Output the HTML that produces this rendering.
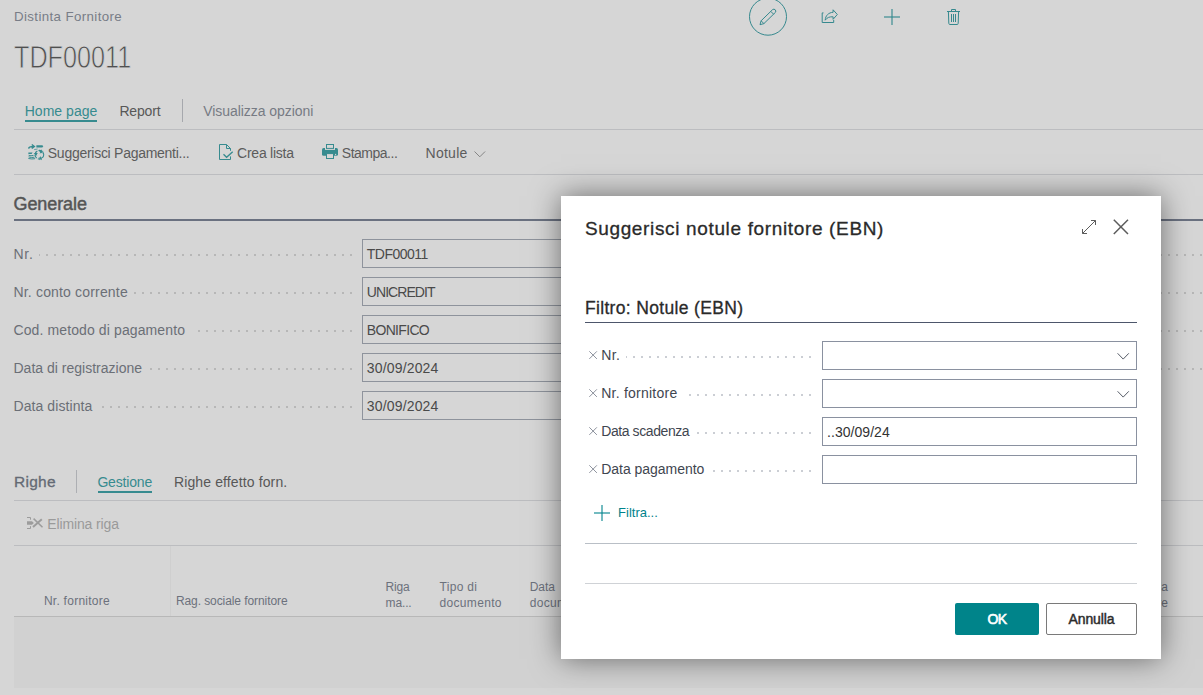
<!DOCTYPE html>
<html lang="it">
<head>
<meta charset="utf-8">
<title>Distinta Fornitore - TDF00011</title>
<style>
*{box-sizing:border-box;margin:0;padding:0}
html,body{width:1203px;height:695px;overflow:hidden}
body{background:#d6d6d6;font-family:"Liberation Sans",sans-serif;font-size:14px;color:#444;position:relative}
.abs{position:absolute;white-space:nowrap;line-height:1}
.t{position:absolute;white-space:nowrap;line-height:20px;height:20px;transform-origin:0 50%}
.hl{position:absolute;height:1px;background:#bcbdc0}
.vl{position:absolute;width:1px;background:#bcbcbc}
.teal{color:#378b8f}
.lbl{color:#6b6f76}
.inp{position:absolute;height:29px;border:1px solid #8e939c;left:362px;width:260px}
.dots{position:absolute;height:2px;background-image:linear-gradient(90deg,#b7b7b7 2px,transparent 2px);background-size:8px 2px;background-repeat:repeat-x}
/* dialog */
#dlg{position:absolute;left:561px;top:196px;width:600px;height:463px;background:#fff;box-shadow:0 0 28px rgba(0,0,0,.5)}
#dlg .hl{background:#c4c8cd}
.dinp{position:absolute;left:261px;width:315px;height:29px;border:1px solid #8a91a0}
.dlbl{color:#3f4650}
.ddots{position:absolute;height:2px;background-image:linear-gradient(90deg,#cbced4 2px,transparent 2px);background-size:8px 2px;background-repeat:repeat-x}
.btn{position:absolute;top:407px;height:32px;border-radius:2px;text-align:center;line-height:30px;font-size:14px}
svg{position:absolute;overflow:visible}
</style>
</head>
<body>
<!-- header -->
<div class="t" style="left:14.0px;top:7.200px;font-size:13.300px;color:#787d87;letter-spacing:0.38px">Distinta Fornitore</div>
<div class="t" style="left:14.0px;top:37px;font-size:31.500px;color:#505050;-webkit-text-stroke:.8px #d6d6d6;height:40px;line-height:40px;transform:scaleX(0.802);letter-spacing:-0.04px">TDF00011</div>

<!-- header icons -->
<svg style="left:0;top:0" width="1203" height="40" viewBox="0 0 1203 40" fill="none" stroke="#36898e" stroke-width="1" stroke-linejoin="round">
<circle cx="768" cy="16.7" r="18.5"/>
<path d="M761.100 20.800L772.600 9.600A2 2 0 0 1 775.400 12.400L763.900 23.600L760 24.700Z M761.100 20.800L763.900 23.600 M770.800 11.400L773.600 14.200"/>
<path d="M823.500 12.900H822.200V22.500H833.700V20"/>
<path d="M833.100 9.800L837.300 14.500L833.100 19.300V16.800C829.500 16.600 827 17.500 825.200 20.200C825.500 15.500 828.500 12.600 833.100 12.300Z"/>
<path d="M892 9V25" stroke="#2f878c" stroke-opacity=".55" stroke-width="2"/><path d="M884 17H900" stroke="#2f878c" stroke-opacity=".55" stroke-width="2"/>
<path d="M947 11.500H960M951.500 11.500V9.500H955.500V11.500M948.400 11.500L948.800 23.400Q948.900 24.500 949.900 24.500H957.100Q958.100 24.500 958.200 23.400L958.600 11.500M951.500 14V22M953.500 14V22M955.500 14V22"/>
</svg>

<!-- tabs -->
<div class="t teal" style="left:24.7px;top:101px;letter-spacing:0.03px">Home page</div>
<div class="abs" style="left:25px;top:120px;width:72px;height:2px;background:#378b8f"></div>
<div class="t" style="left:119.4px;top:101px;color:#585858;letter-spacing:-0.15px">Report</div>
<div class="vl" style="left:182px;top:99px;height:23px;background:#a6a8ad"></div>
<div class="t" style="left:203.3px;top:101px;color:#767b84;letter-spacing:-0.06px">Visualizza opzioni</div>
<div class="hl" style="left:14px;top:129px;width:1189px"></div>

<!-- actions -->
<svg style="left:28px;top:144px" width="16" height="16" viewBox="0 0 16 16" fill="none" stroke="#378b8f" stroke-width="1.3">
<path d="M.7 4.600C.8 2.800 2 2.400 6 2.500M3.800.5L6.300 2.500 3.800 4.500" stroke-width="1.500"/>
<path d="M8.400 1.200H14.300L15.300 2.300 14.300 3.400H8.400Z" fill="#378b8f" stroke="none"/>
<path d="M.4 8.600H4.600L3.600 10.100H.4Z" fill="#378b8f" stroke="none"/>
<path d="M.6 11.200Q3 12.300 5.500 11.400M.6 12.900Q3.500 14 6.500 13.200M.4 14.500Q3.800 15.300 7.200 14.700" stroke-width="1"/>
<circle cx="11.400" cy="10.700" r="4.300" stroke-width="1.100" stroke-dasharray="3.500 1.200"/>
<path d="M13.200 5.200l.6 1.600 1.700.1-1.300 1.100.4 1.700-1.400-.9-1.500.9.500-1.700-1.400-1.100 1.800-.1z M7.800 7.600l.6 1.500 1.600.1-1.200 1 .4 1.600-1.400-.9-1.400.9.400-1.600-1.200-1 1.600-.1z M12.600 12l.6 1.500 1.600.1-1.200 1 .4 1.600-1.400-.9-1.400.9.400-1.600-1.200-1 1.600-.1z" fill="#378b8f" stroke="none"/>
<path d="M6.200 5.600L9.600 5" stroke-width=".9" opacity=".8"/>
</svg>
<svg style="left:219px;top:144px" width="15" height="16" viewBox="0 0 15 16" fill="none" stroke="#378b8f" stroke-width="1">
<path d="M11.500 6.800V4.500L7.500.5H.5V15.500H11.500V12.400M7.500.5V4.500H11.500"/>
<path d="M4.500 10.200L7.600 13.300 13.700 7.700" stroke-width="1.300"/>
</svg>
<svg style="left:322px;top:144px" width="16" height="15" viewBox="0 0 16 15">
<rect x="0" y="4.100" width="16" height="7.700" rx="1.600" fill="#378b8f"/>
<rect x="3" y="0" width="10" height="5.900" fill="#d6d6d6"/>
<rect x="4.500" y=".5" width="7" height="3.900" fill="none" stroke="#378b8f"/>
<rect x="4.500" y="9.600" width="7" height="4.900" fill="#d6d6d6" stroke="#378b8f"/>
<circle cx="13.600" cy="10.500" r=".65" fill="#d6d6d6"/>
</svg>
<div class="t" style="left:47.8px;top:143px;color:#5c5c5c;letter-spacing:-0.27px">Suggerisci Pagamenti...</div>
<div class="t" style="left:237.1px;top:143px;color:#5c5c5c;letter-spacing:-0.25px">Crea lista</div>
<div class="t" style="left:341.8px;top:143px;color:#5c5c5c;letter-spacing:-0.49px">Stampa...</div>
<div class="t" style="left:425.5px;top:143px;color:#5c5c5c;letter-spacing:0.27px">Notule</div>
<svg style="left:474px;top:151px" width="12" height="7" viewBox="0 0 12 7" fill="none" stroke="#858585" stroke-width="1"><path d="M.5.500l5.300 5.300 5.300-5.300"/></svg>
<div class="hl" style="left:14px;top:174px;width:1189px"></div>

<!-- Generale -->
<div class="t" style="left:13.5px;top:194px;font-size:18px;-webkit-text-stroke:0.45px #555;color:#555;letter-spacing:-0.09px">Generale</div>
<div class="hl" style="left:14px;top:219px;width:1189px;height:2px;background:#6a7180"></div>

<div class="t lbl" style="left:13.5px;top:244px;letter-spacing:0.75px">Nr.</div>
<div class="t lbl" style="left:13.5px;top:282px;letter-spacing:0.17px">Nr. conto corrente</div>
<div class="t lbl" style="left:13.5px;top:320px;letter-spacing:0.11px">Cod. metodo di pagamento</div>
<div class="t lbl" style="left:13.5px;top:358px;letter-spacing:0.01px">Data di registrazione</div>
<div class="t lbl" style="left:13.5px;top:396px;letter-spacing:0.08px">Data distinta</div>
<div class="dots" style="left:39px;top:254px;width:318px;background-position:-1px 0"></div>
<div class="dots" style="left:134px;top:292px;width:223px;background-position:0px 0"></div>
<div class="dots" style="left:192px;top:330px;width:165px;background-position:-2px 0"></div>
<div class="dots" style="left:148px;top:368px;width:209px;background-position:2px 0"></div>
<div class="dots" style="left:98px;top:406px;width:259px;background-position:4px 0"></div>
<div class="inp" style="top:239px"><span class="t" style="left:3.8px;top:4px;color:#4a4a4a;letter-spacing:-0.52px">TDF00011</span></div>
<div class="inp" style="top:277px"><span class="t" style="left:3.8px;top:4px;color:#4a4a4a;letter-spacing:-0.94px">UNICREDIT</span></div>
<div class="inp" style="top:315px"><span class="t" style="left:3.8px;top:4px;color:#4a4a4a;letter-spacing:-0.68px">BONIFICO</span></div>
<div class="inp" style="top:353px"><span class="t" style="left:3.8px;top:4px;color:#4a4a4a;letter-spacing:0.16px">30/09/2024</span></div>
<div class="inp" style="top:391px"><span class="t" style="left:3.8px;top:4px;color:#4a4a4a;letter-spacing:0.16px">30/09/2024</span></div>
<!-- right column leaders -->
<div class="dots" style="left:1161px;top:254px;width:42px;background-position:-1px 0"></div>
<div class="dots" style="left:1161px;top:292px;width:42px;background-position:-1px 0"></div>
<div class="dots" style="left:1161px;top:330px;width:42px;background-position:-1px 0"></div>
<div class="dots" style="left:1161px;top:368px;width:42px;background-position:-1px 0"></div>

<!-- Righe -->
<div class="t" style="left:14.0px;top:472px;font-size:15.500px;-webkit-text-stroke:0.3px #646a74;color:#646a74;letter-spacing:0.28px">Righe</div>
<div class="vl" style="left:76px;top:470px;height:23px;background:#adafb3"></div>
<div class="t teal" style="left:97.4px;top:472px;letter-spacing:-0.18px">Gestione</div>
<div class="abs" style="left:98px;top:491px;width:54px;height:2px;background:#378b8f"></div>
<div class="t" style="left:174.0px;top:472px;color:#585858;letter-spacing:0.12px">Righe effetto forn.</div>
<div class="hl" style="left:14px;top:500px;width:1189px"></div>
<svg style="left:27px;top:517px" width="16" height="12" viewBox="0 0 16 12" fill="none" stroke="#9c9c9c" stroke-width="1">
<path d="M0 .5H3.500V2.700M3.500 9.200V11.500H0"/>
<path d="M0 4.200H5L6.800 6 5 7.700H0Z" fill="#9c9c9c" stroke="none"/>
<path d="M6.600 1.600L15.500 10.200" stroke-width="1.500"/><path d="M14.800 2.300L6 10" stroke-width="1.900"/>
</svg>
<div class="t" style="left:47.2px;top:514px;color:#9a9a9a;letter-spacing:-0.12px">Elimina riga</div>
<div class="hl" style="left:14px;top:545px;width:1189px"></div>
<div class="vl" style="left:170px;top:546px;height:70px;background:#cfcfcf"></div>
<div class="t" style="left:43.9px;top:591px;font-size:12px;color:#6c717c;letter-spacing:0.26px">Nr. fornitore</div>
<div class="t" style="left:175.9px;top:591px;font-size:12px;color:#6c717c;letter-spacing:-0.08px">Rag. sociale fornitore</div>
<div class="t" style="left:385.6px;top:577px;font-size:12px;color:#6c717c;letter-spacing:-0.20px">Riga</div>
<div class="t" style="left:385.6px;top:593px;font-size:12px;color:#6c717c;letter-spacing:-0.14px">ma...</div>
<div class="t" style="left:439.5px;top:577px;font-size:12px;color:#6c717c;letter-spacing:0.32px">Tipo di</div>
<div class="t" style="left:439.5px;top:593px;font-size:12px;color:#6c717c;letter-spacing:0.33px">documento</div>
<div class="t" style="left:529.7px;top:577px;font-size:12px;color:#6c717c;letter-spacing:-0.05px">Data</div>
<div class="t" style="left:529.7px;top:593px;font-size:12px;color:#6c717c;letter-spacing:0.33px">documento</div>
<div class="t" style="right:35px;top:577px;font-size:12px;color:#6c717c">della</div>
<div class="t" style="right:35px;top:593px;font-size:12px;color:#6c717c">fornitore</div>
<div class="hl" style="left:14px;top:616px;width:1189px;background:#b8b8b8"></div>
<div class="abs" style="left:14px;top:617px;width:1189px;height:71px;background:#d1d1d1"></div>

<!-- dialog -->
<div id="dlg">
<div class="t" style="left:23.9px;top:22.5px;font-size:19px;-webkit-text-stroke:0.3px #2a2a2a;color:#2a2a2a;letter-spacing:0.65px">Suggerisci notule fornitore (EBN)</div>
<svg style="left:0;top:0" width="600" height="60" viewBox="0 0 600 60" fill="none" stroke="#5c5c5c" stroke-width="1"><path d="M530 24.500H534.500V29M521.500 33V37.500H526M521.500 37.500L534.500 24.500"/><path d="M552.800 23.800L567 38M567 23.800L552.800 38" stroke-width="1.500"/></svg>

<div class="t" style="left:23.9px;top:101.5px;font-size:17.500px;-webkit-text-stroke:0.3px #2a2a2a;color:#2a2a2a;letter-spacing:0.34px">Filtro: Notule (EBN)</div>
<div class="hl" style="left:24px;top:126px;width:552px;background:#4d566b"></div>

<div class="t dlbl" style="left:40.2px;top:149px;letter-spacing:0.40px">Nr.</div>
<div class="t dlbl" style="left:40.2px;top:187px;letter-spacing:0.24px">Nr. fornitore</div>
<div class="t dlbl" style="left:40.2px;top:225px;letter-spacing:-0.41px">Data scadenza</div>
<div class="t dlbl" style="left:40.2px;top:263px;letter-spacing:-0.03px">Data pagamento</div>
<svg style="left:0;top:0" width="600" height="300" viewBox="0 0 600 300" fill="none" stroke="#7a808c" stroke-width=".85">
<path d="M28.300 155.3L35.900 162.9M35.900 155.3L28.300 162.9"/>
<path d="M28.300 193.3L35.900 200.9M35.900 193.3L28.300 200.9"/>
<path d="M28.300 231.3L35.900 238.9M35.900 231.3L28.300 238.9"/>
<path d="M28.300 269.3L35.900 276.9M35.900 269.3L28.300 276.9"/>
<path d="M556.600 157.3L562.200 163.1L567.800 157.3" stroke="#555b66" stroke-width="1"/>
<path d="M556.600 195.3L562.200 201.1L567.800 195.3" stroke="#555b66" stroke-width="1"/>
</svg>
<div class="ddots" style="left:65px;top:160px;width:190px;background-position:-1px 0"></div>
<div class="ddots" style="left:122px;top:198px;width:133px;background-position:6px 0"></div>
<div class="ddots" style="left:135px;top:236px;width:120px;background-position:1px 0"></div>
<div class="ddots" style="left:149px;top:274px;width:106px;background-position:3px 0"></div>
<div class="dinp" style="top:145px"></div>
<div class="dinp" style="top:183px"></div>
<div class="dinp" style="top:221px"><span class="t" style="left:4.1px;top:4px;color:#333;letter-spacing:0.04px">..30/09/24</span></div>
<div class="dinp" style="top:259px"></div>

<div class="t" style="left:57.1px;top:307px;font-size:13px;color:#00838c;letter-spacing:-0.00px">Filtra...</div>
<svg style="left:33px;top:309px" width="16" height="16" viewBox="0 0 16 16" fill="none" stroke="#00838c" stroke-opacity=".55" stroke-width="2"><path d="M8 0v16"/><path d="M0 8h16"/></svg>
<div class="hl" style="left:24px;top:347px;width:552px;background:#b9bfc6"></div>
<div class="hl" style="left:24px;top:387px;width:552px;background:#cfd2d6"></div>
<div class="btn" style="left:394px;width:84px;background:#00848a;color:#fff;line-height:33px;-webkit-text-stroke:.6px #fff;letter-spacing:-.5px">OK</div>
<div class="btn" style="left:485px;width:91px;border:1px solid #7a7a7a;color:#2b2b2b;background:#fff;-webkit-text-stroke:.45px #2b2b2b;letter-spacing:-.1px">Annulla</div>
</div>
</body>
</html>
